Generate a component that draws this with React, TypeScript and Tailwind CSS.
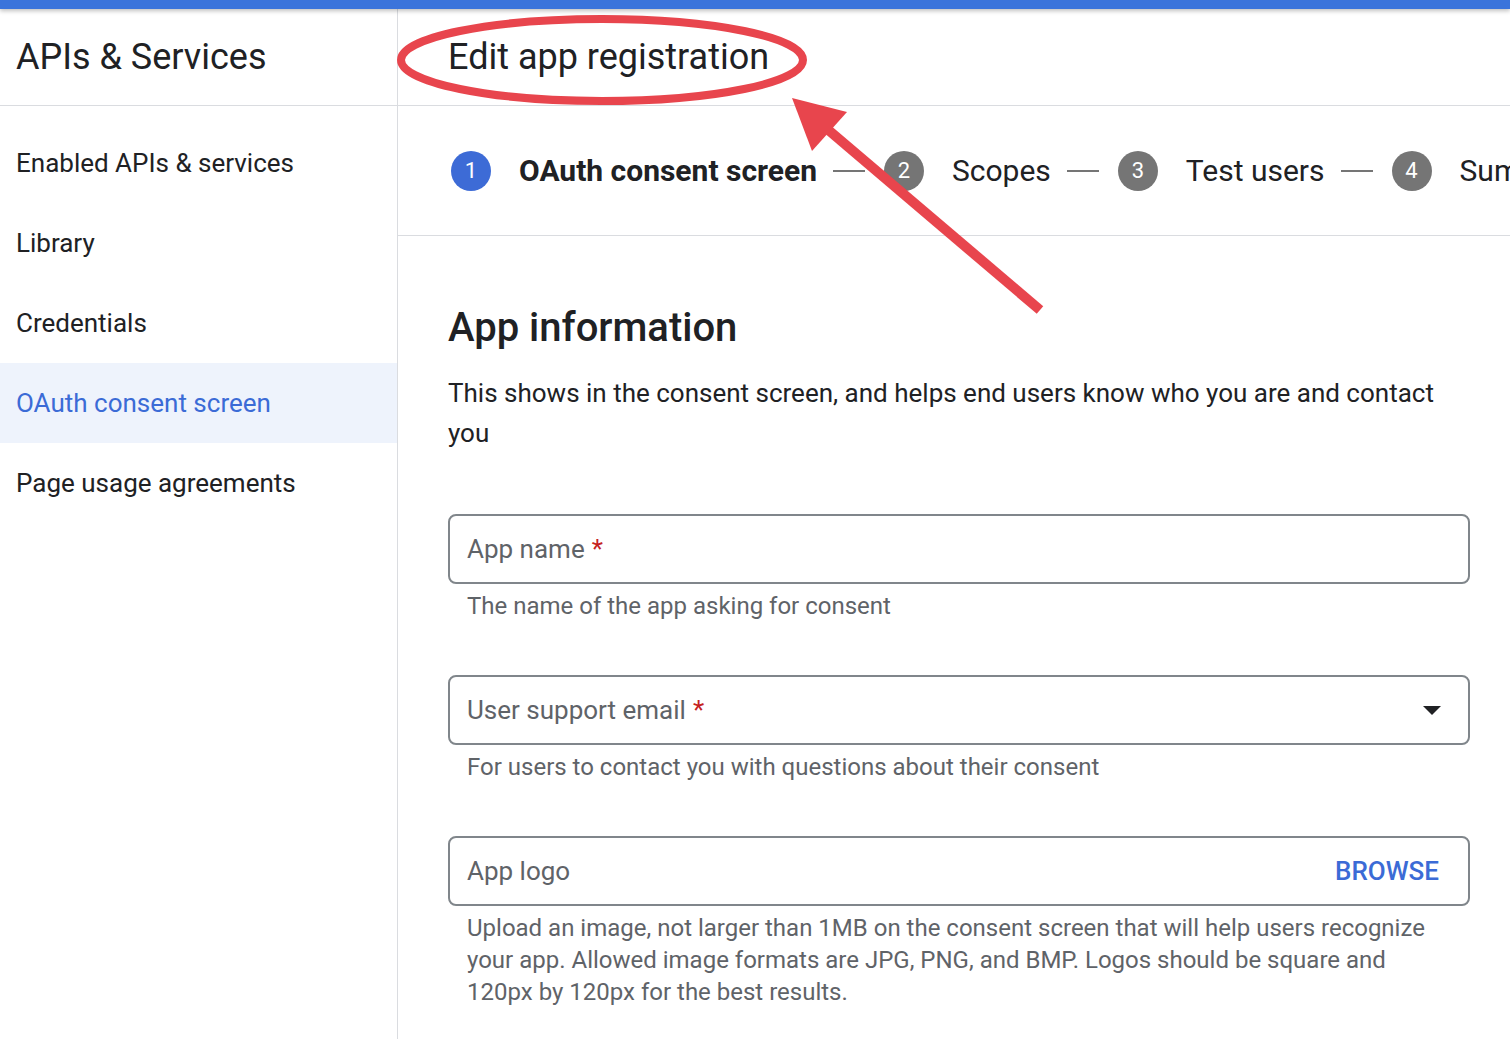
import React from "react";

const navItems = [
  "Enabled APIs & services",
  "Library",
  "Credentials",
  "OAuth consent screen",
  "Page usage agreements",
];

const steps = [
  { n: 1, label: "OAuth consent screen" },
  { n: 2, label: "Scopes" },
  { n: 3, label: "Test users" },
  { n: 4, label: "Summary" },
];

function Sidebar() {
  return (
    <aside className="w-[398px] shrink-0 border-r border-[#dadce0] flex flex-col">
      <div className="h-[97px] border-b border-[#dadce0] flex items-center pl-[16px]">
        <h1 className="text-[36px] text-[#202124] leading-none">APIs &amp; Services</h1>
      </div>
      <nav className="pt-[17px]">
        {navItems.map((item) => {
          const active = item === "OAuth consent screen";
          return (
            <div
              key={item}
              className={`h-[80px] flex items-center pl-[16px] text-[26px] ${
                active ? "bg-[#eef3fc] text-[#3b6bd6]" : "text-[#202124]"
              }`}
            >
              {item}
            </div>
          );
        })}
      </nav>
    </aside>
  );
}

function Stepper() {
  return (
    <div className="h-[130px] border-b border-[#dadce0] flex items-center pl-[53px] whitespace-nowrap overflow-hidden">
      {steps.map((step, i) => (
        <div key={step.n} className="flex items-center shrink-0">
          <div
            className={`w-[40px] h-[40px] rounded-full flex items-center justify-center text-white text-[22px] ${
              step.n === 1 ? "bg-[#3d6bd6]" : "bg-[#757575]"
            }`}
          >
            {step.n}
          </div>
          <span
            className={`ml-[28px] text-[30px] text-[#202124] ${
              step.n === 1 ? "font-bold" : ""
            }`}
          >
            {step.label}
          </span>
          {i < steps.length - 1 && (
            <div className="ml-[16px] mr-[19px] w-[32px] h-[2px] bg-[#757575]" />
          )}
        </div>
      ))}
    </div>
  );
}

function Field({
  label,
  required,
  helper,
  right,
}: {
  label: string;
  required?: boolean;
  helper: React.ReactNode;
  right?: React.ReactNode;
}) {
  return (
    <div>
      <div className="h-[70px] border-2 border-[#80868b] rounded-[8px] flex items-center justify-between pl-[17px] pr-[27px]">
        <span className="text-[26px] text-[#5f6368]">
          {label}
          {required && <span className="text-[#c5221f] ml-[7px]">*</span>}
        </span>
        {right}
      </div>
      <p className="mt-[6px] px-[19px] text-[24px] leading-[32px] text-[#5f6368]">{helper}</p>
    </div>
  );
}

function Annotation() {
  return (
    <svg
      className="absolute inset-0 pointer-events-none"
      width="1510"
      height="1039"
      viewBox="0 0 1510 1039"
    >
      <ellipse cx="602" cy="60" rx="201" ry="41" fill="none" stroke="#e8454d" strokeWidth="8" />
      <line x1="1040" y1="310" x2="826" y2="128" stroke="#e8454d" strokeWidth="10" />
      <polygon points="792,98 847,112 812,151" fill="#e8454d" />
    </svg>
  );
}

export default function App() {
  return (
    <div className="relative w-[1510px] h-[1039px] overflow-hidden bg-white font-['Roboto',sans-serif]">
      <div className="relative z-10 h-[9px] bg-[#3b74db] shadow-[0_2px_4px_rgba(0,0,0,0.25)]" />
      <div className="flex h-[1030px]">
        <Sidebar />
        <main className="flex-1 min-w-0 flex flex-col">
          <div className="h-[97px] border-b border-[#dadce0] flex items-center pl-[50px]">
            <h1 className="text-[36px] text-[#202124] leading-none">Edit app registration</h1>
          </div>
          <Stepper />
          <div className="pl-[50px] pr-[40px] pt-[68px]">
            <h2 className="text-[40px] leading-[48px] font-medium text-[#202124]">App information</h2>
            <p className="mt-[21px] text-[26px] leading-[40px] text-[#202124]">
              This shows in the consent screen, and helps end users know who you are and contact you
            </p>
            <div className="mt-[61px] flex flex-col gap-[53px]">
              <Field label="App name" required helper="The name of the app asking for consent" />
              <Field
                label="User support email"
                required
                helper="For users to contact you with questions about their consent"
                right={
                  <svg width="18" height="9" viewBox="0 0 18 9">
                    <polygon points="0,0 18,0 9,9" fill="#202124" />
                  </svg>
                }
              />
              <Field
                label="App logo"
                helper="Upload an image, not larger than 1MB on the consent screen that will help users recognize your app. Allowed image formats are JPG, PNG, and BMP. Logos should be square and 120px by 120px for the best results."
                right={<span className="mr-[2px] text-[26px] font-medium text-[#3b6bd6]">BROWSE</span>}
              />
            </div>
          </div>
        </main>
      </div>
      <Annotation />
    </div>
  );
}
